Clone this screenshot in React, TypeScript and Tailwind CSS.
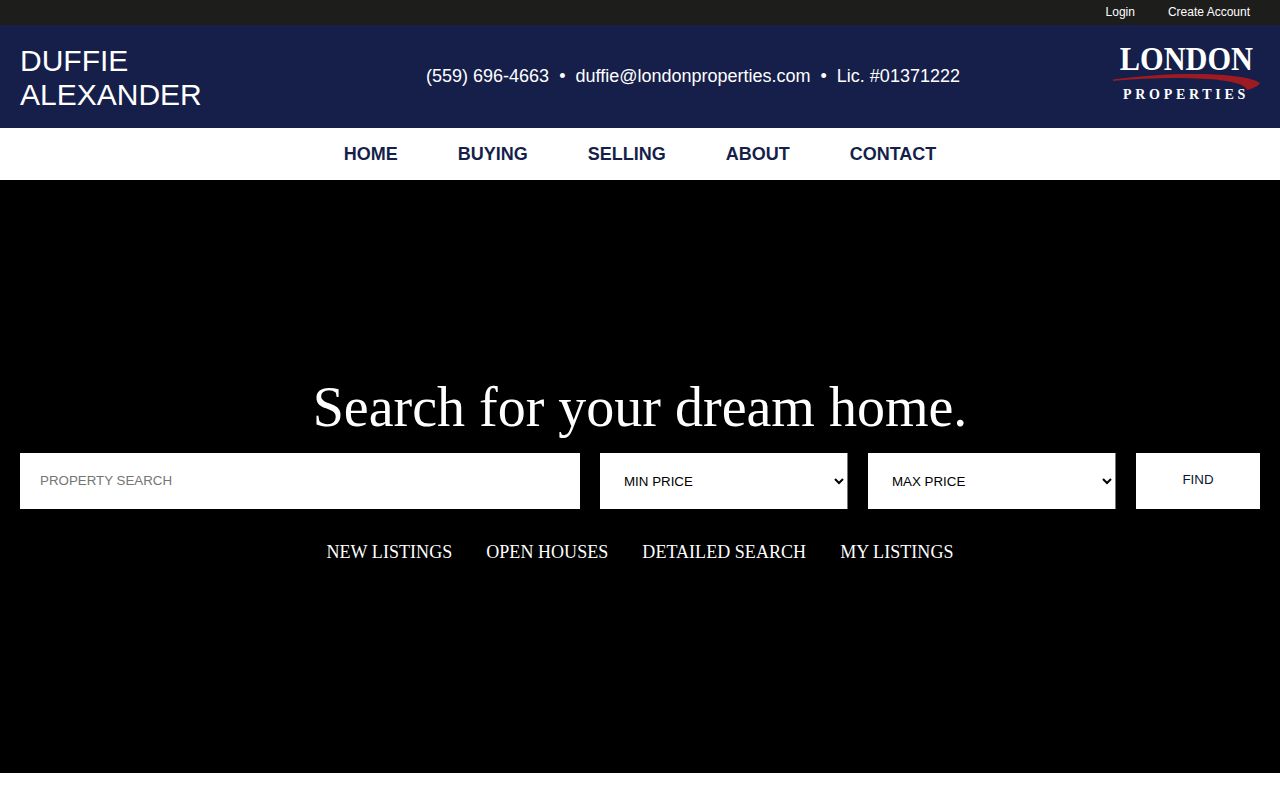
export default function App() {
  const arial = { fontFamily: '"Liberation Sans", Arial, sans-serif' };
  return (
    <div className="min-h-[800px] bg-white font-['Liberation_Sans',Arial,sans-serif]">
      <div className="flex h-[25px] items-center justify-end gap-[33px] bg-[#1d1d1b] pb-[2px] pr-[30px] text-[12px] text-white">
        <a>Login</a>
        <a>Create Account</a>
      </div>
      <header className="flex h-[103px] items-center justify-between bg-[#161f4a] pl-5 pr-5 text-white">
        <div className="w-[254px] pt-[3px] text-[30px] leading-[34px]">
          DUFFIE
          <br />
          ALEXANDER
        </div>
        <div className="flex gap-[10px] pb-[2px] text-[18px] leading-6">
          <span>(559) 696-4663</span>
          <span>•</span>
          <span>duffie@londonproperties.com</span>
          <span>•</span>
          <span>Lic. #01371222</span>
        </div>
        <div className="relative flex h-[58px] w-[148px] flex-col items-center font-['Liberation_Serif',serif]">
          <span className="scale-x-[0.92] text-[33px] font-bold leading-[22px]">LONDON</span>
          <svg className="absolute left-0 top-[23px]" width="148" height="20" viewBox="0 0 148 20">
            <path d="M1 8.500 C30 4.500 62 2.500 88 3 C115 3.500 140 6 148 12 C146 15 141 17.500 135 19 C134 12 110 7.800 78 7.200 C50 6.800 22 8 1 10 Z" fill="#9e1b22" />
          </svg>
          <span className="absolute left-[11px] top-[38px] text-[14px] font-bold leading-[18px] tracking-[3.700px]">PROPERTIES</span>
        </div>
      </header>
      <nav className="flex h-[52px] items-center justify-center gap-[60px] bg-white text-[18px] font-bold text-[#161f4a]">
        <a>HOME</a>
        <a>BUYING</a>
        <a>SELLING</a>
        <a>ABOUT</a>
        <a>CONTACT</a>
      </nav>
      <section className="flex h-[593px] flex-col items-center bg-black px-5 pt-[187px]">
        <h1 className="mb-[5px] font-['Liberation_Serif',serif] text-[56px] font-normal leading-[81px] text-white">
          Search for your dream home.
        </h1>
        <form className="flex w-full gap-5" style={arial}>
          <input
            className="h-14 w-[560px] bg-white px-5 pb-[1px] text-[13.333px] text-black outline-none placeholder:text-[#757575]"
            placeholder="PROPERTY SEARCH"
          />
          <select className="h-14 w-[248px] border-r border-[#767676] bg-white pl-5 text-[13.333px] text-black outline-none">
            <option>MIN PRICE</option>
          </select>
          <select className="h-14 w-[248px] border-r border-[#767676] bg-white pl-5 text-[13.333px] text-black outline-none">
            <option>MAX PRICE</option>
          </select>
          <button type="button" className="h-14 w-[124px] bg-white pb-[2px] text-[13.333px] text-[#0d1433]">
            FIND
          </button>
        </form>
        <div className="mt-[32px] flex gap-[34px] font-['Liberation_Serif',serif] text-[18px] leading-[22px] tracking-[0.05px] text-white">
          <a>NEW LISTINGS</a>
          <a>OPEN HOUSES</a>
          <a>DETAILED SEARCH</a>
          <a>MY LISTINGS</a>
        </div>
      </section>
    </div>
  );
}
